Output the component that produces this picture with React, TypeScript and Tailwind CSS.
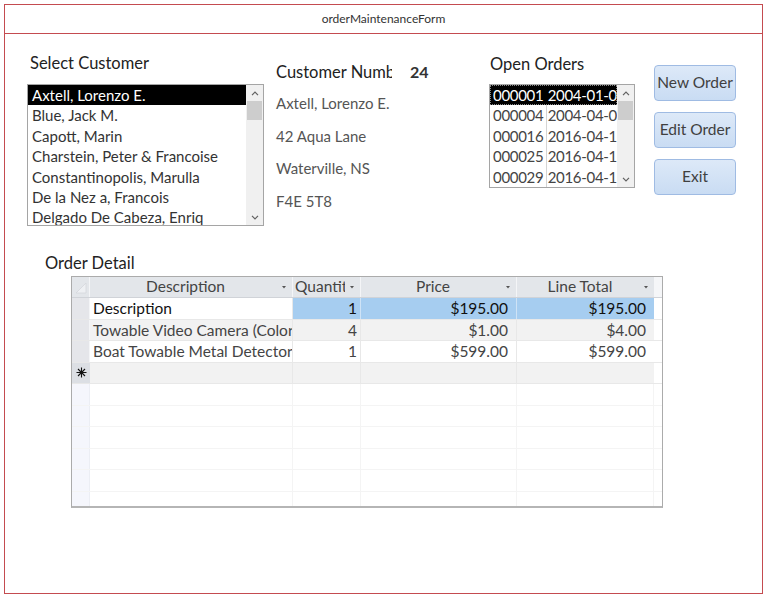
import React from 'react'

const customers = [
    'Axtell, Lorenzo E.',
    'Blue, Jack M.',
    'Capott, Marin',
    'Charstein, Peter & Francoise',
    'Constantinopolis, Marulla',
    'De la Nez a, Francois',
    'Delgado De Cabeza, Enriq',
]

const orders = [
    ['000001', '2004-01-0'],
    ['000004', '2004-04-0'],
    ['000016', '2016-04-1'],
    ['000025', '2016-04-1'],
    ['000029', '2016-04-1'],
]

const lines = [
    { desc: 'Description', qty: '1', price: '$195.00', total: '$195.00' },
    { desc: 'Towable Video Camera (Color)', qty: '4', price: '$1.00', total: '$4.00' },
    { desc: 'Boat Towable Metal Detector', qty: '1', price: '$599.00', total: '$599.00' },
]

const font = { fontFamily: 'Lato, "Noto Sans", sans-serif' }

const Chevron: React.FC<{ up?: boolean }> = ({ up }) => (
    <svg width="8" height="5" viewBox="0 0 8 5" className="block">
        <path
            d={up ? 'M1 4.2 L4 1.2 L7 4.2' : 'M1 0.8 L4 3.8 L7 0.8'}
            fill="none"
            stroke="#606060"
            strokeWidth="1.2"
        />
    </svg>
)

const ScrollBar: React.FC = () => (
    <div className="w-[17px] h-full bg-[#f0f0f0] flex flex-col items-center shrink-0">
        <div className="h-[16px] flex items-center justify-center">
            <Chevron up />
        </div>
        <div className="w-[15px] h-[19px] bg-[#cdcdcd]" />
        <div className="flex-1" />
        <div className="h-[16px] flex items-center justify-center">
            <Chevron />
        </div>
    </div>
)

const Arrow: React.FC = () => (
    <svg width="6" height="4" viewBox="0 0 6 4" className="shrink-0">
        <path d="M1 1 L5 1 L3 3.4 Z" fill="#555" />
    </svg>
)

// thin asterisk for the new-record row
const NewRowMark: React.FC = () => (
    <svg width="11" height="11" viewBox="0 0 11 11">
        <path d="M5.5 0.5 V10.5 M0.5 5.5 H10.5 M2 2 L9 9 M9 2 L2 9" stroke="#111" strokeWidth="1.1" />
    </svg>
)

const AppButton: React.FC<{ label: string }> = ({ label }) => (
    <button className="w-[82px] h-[36px] rounded-[4px] border border-[#9fbbe3] bg-gradient-to-b from-[#dde9f8] to-[#c9dcf3] text-[15.5px] text-[#404040] leading-none">
        {label}
    </button>
)

export default function App() {
    return (
        <div className="w-[768px] h-[598px] bg-white pt-[4px] pl-[4px]" style={font}>
            <div className="w-[759px] h-[590px] border border-[#c44b50] flex flex-col">
                <div className="h-[29px] border-b border-[#c44b50] flex items-center justify-center text-[12px] text-[#333]">
                    orderMaintenanceForm
                </div>

                <div className="flex pl-[22px] pt-[18px]">
                    <div className="w-[237px]">
                        <div className="pl-[3px] h-[22px] text-[16.5px] leading-[22px] text-[#222]">Select Customer</div>
                        <div className="mt-[10px] h-[142px] border border-[#a5a5a5] flex">
                            <div className="flex-1 overflow-hidden text-[15px] text-[#333]">
                                {customers.map((c, i) => (
                                    <div
                                        key={c}
                                        className={`h-[20.4px] leading-[20.4px] pl-[4px] whitespace-nowrap ${i === 0 ? 'bg-black text-white' : ''}`}
                                    >
                                        {c}
                                    </div>
                                ))}
                            </div>
                            <ScrollBar />
                        </div>
                    </div>

                    <div className="w-[213px] ml-[12px] pt-[8px] text-[15px]">
                        <div className="flex h-[24px] items-center">
                            <div className="w-[116px] overflow-hidden whitespace-nowrap text-[16.5px] text-[#222]">Customer Number</div>
                            <div className="ml-[18px] font-bold text-[16px] text-[#333]">24</div>
                        </div>
                        <div className="text-[#555] leading-[32.5px] mt-[3px]">
                            <div>Axtell, Lorenzo E.</div>
                            <div>42 Aqua Lane</div>
                            <div>Waterville, NS</div>
                            <div>F4E 5T8</div>
                        </div>
                    </div>

                    <div className="w-[146px]">
                        <div className="pl-[1px] h-[22px] text-[16.5px] leading-[22px] text-[#222] mt-[1px]">Open Orders</div>
                        <div className="mt-[9px] h-[104px] border border-[#a5a5a5] flex">
                            <div className="flex-1 overflow-hidden text-[15px] text-[#444] relative tracking-[-0.3px]">
                                <div className="absolute left-[56px] top-0 bottom-0 w-px bg-[#d4d4d4]" />
                                {orders.map((o, i) => (
                                    <div
                                        key={o[0]}
                                        className={`h-[20.4px] leading-[20.4px] flex whitespace-nowrap relative ${i === 0 ? 'bg-black text-white outline-1 outline-dotted outline-[#888] -outline-offset-1' : ''}`}
                                    >
                                        <div className="w-[57px] pl-[3px]">{o[0]}</div>
                                        <div className="pl-[3px]">{o[1]}</div>
                                    </div>
                                ))}
                            </div>
                            <ScrollBar />
                        </div>
                    </div>

                    <div className="ml-[19px] pt-[13px] flex flex-col gap-[11px]">
                        <AppButton label="New Order" />
                        <AppButton label="Edit Order" />
                        <AppButton label="Exit" />
                    </div>
                </div>

                <div className="pl-[40px] mt-[26px] h-[22px] text-[16.5px] leading-[22px] text-[#222]">Order Detail</div>

                <div className="ml-[66px] mt-[2px] w-[592px] h-[232px] border border-[#ababab] border-b-2 border-b-[#b5b5b5] overflow-hidden text-[15.5px]">
                    <div className="flex h-[21px] bg-[#e3e6ea] border-b border-[#d0d3d8] text-[#444]">
                        <div className="w-[18px] border-r border-[#f4f5f7] relative">
                            <svg width="12" height="12" viewBox="0 0 12 12" className="absolute left-[3px] top-[5px]">
                                <path d="M11 1 L11 11 L1 11 Z" fill="#eef0f3" stroke="#d4d7dc" strokeWidth="0.8" />
                            </svg>
                        </div>
                        <div className="w-[203px] border-r border-[#f4f5f7] flex items-center pr-[5px]">
                            <div className="flex-1 text-center">Description</div>
                            <Arrow />
                        </div>
                        <div className="w-[68px] border-r border-[#f4f5f7] flex items-center pl-[2px] pr-[5px] overflow-hidden">
                            <div className="flex-1 overflow-hidden whitespace-nowrap mr-[4px]">Quantity</div>
                            <Arrow />
                        </div>
                        <div className="w-[156px] border-r border-[#f4f5f7] flex items-center pr-[5px]">
                            <div className="flex-1 text-center">Price</div>
                            <Arrow />
                        </div>
                        <div className="w-[137px] flex items-center pr-[5px]">
                            <div className="flex-1 text-center">Line Total</div>
                            <Arrow />
                        </div>
                        <div className="flex-1 bg-[#f5f6f8]" />
                    </div>

                    {lines.map((l, i) => {
                        const rowBg = i === 1 ? 'bg-[#f2f2f2]' : 'bg-white'
                        const numBg = i === 0 ? 'bg-[#a6cdf0] border-r border-[#cfe3f6]' : 'border-r border-[#e8e8e8]'
                        const ink = i === 0 ? 'text-[#111]' : 'text-[#444]'
                        return (
                            <div key={l.desc} className={`flex h-[21.5px] border-b border-[#e8e8e8] ${rowBg} leading-[20.5px]`}>
                                <div className="w-[18px] bg-[#e5e6ea] border-r border-[#f4f5f7]" />
                                <div className={`w-[203px] pl-[3px] whitespace-nowrap overflow-hidden border-r border-[#e8e8e8] ${i === 0 ? 'bg-white' : ''} ${ink}`}>
                                    {l.desc}
                                </div>
                                <div className={`w-[68px] text-right pr-[3px] ${numBg} ${ink}`}>{l.qty}</div>
                                <div className={`w-[156px] text-right pr-[8px] ${numBg} ${ink}`}>{l.price}</div>
                                <div className={`w-[137px] text-right pr-[8px] ${i === 0 ? 'bg-[#a6cdf0]' : ''} ${ink}`}>{l.total}</div>
                                <div className="flex-1 bg-white" />
                            </div>
                        )
                    })}

                    <div className="flex h-[21.5px] bg-[#f2f2f2] border-b border-[#e8e8e8]">
                        <div className="w-[18px] bg-[#dcdfe4] flex items-center justify-center">
                            <NewRowMark />
                        </div>
                        <div className="w-[203px] border-r border-[#e8e8e8]" />
                        <div className="w-[68px] border-r border-[#e8e8e8]" />
                        <div className="w-[156px] border-r border-[#e8e8e8]" />
                        <div className="w-[137px]" />
                        <div className="flex-1 bg-white" />
                    </div>

                    {[0, 1, 2, 3, 4, 5].map(r => (
                        <div key={r} className="flex h-[21.5px] bg-white border-b border-[#f4f4f4]">
                            <div className="w-[18px] bg-[#f5f6fc] border-r border-[#eceef4]" />
                            <div className="w-[203px] border-r border-[#f4f4f4]" />
                            <div className="w-[68px] border-r border-[#f4f4f4]" />
                            <div className="w-[156px] border-r border-[#f4f4f4]" />
                            <div className="w-[137px] border-r border-[#f4f4f4]" />
                            <div className="flex-1" />
                        </div>
                    ))}
                </div>
            </div>
        </div>
    )
}
